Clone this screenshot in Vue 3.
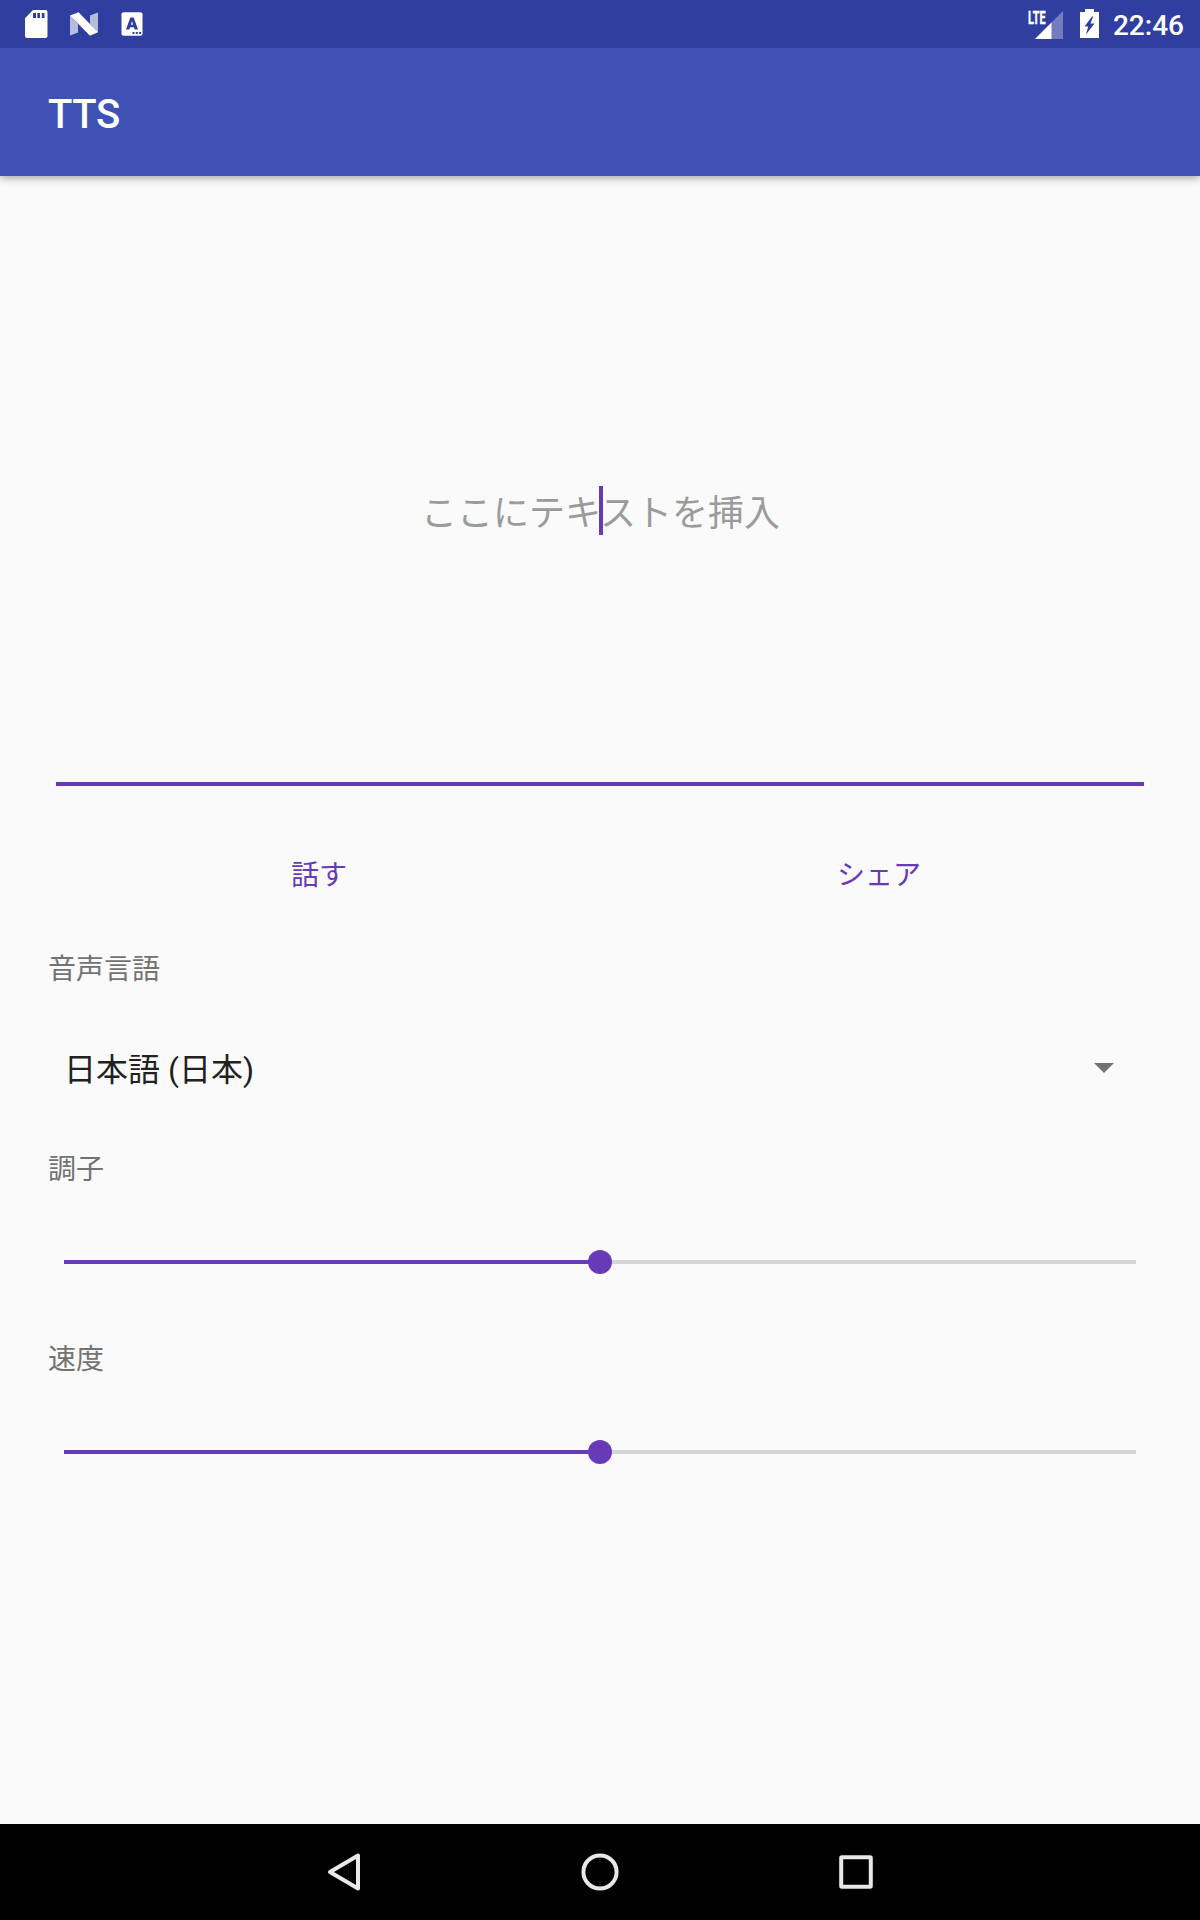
<template>
  <div class="screen">
    <header class="status-bar">
      <div class="status-left">
        <svg class="icon-sd" width="24" height="28" viewBox="0 0 24 28">
          <path
            fill="#fff"
            fill-rule="evenodd"
            d="M9 0H21.500a2 2 0 0 1 2 2V26a2 2 0 0 1-2 2H3a2 2 0 0 1-2-2V8.300ZM9 3v5h3V3ZM13.300 3v5h2.700V3ZM17.800 3v5h2.700V3Z"
          />
        </svg>
        <svg class="icon-n" width="28" height="24" viewBox="0 0 28 24">
          <path fill="#fff" fill-opacity=".65" d="M0 3.500 8 12V20.500L0 23.500ZM28 .5V20.500L20 12V3.500Z" />
          <path fill="#fff" d="M0 3.500 8.500.3 28 20.200 20 23.700Z" />
        </svg>
        <svg class="icon-lang" width="22" height="24" viewBox="0 0 22 24">
          <rect x=".5" y=".3" width="21" height="23.400" rx="2" fill="#fff" />
          <path
            fill="#303f9f"
            fill-rule="evenodd"
            d="M9.300 5.500H12.700L17 17.500H13.700L12.900 15.300H9.100L8.300 17.500H5ZM9.900 12.700H12.100L11 9.200Z"
          />
          <path d="M11.500 20h2v2h-2zM14.800 20h2v2h-2zM18.100 20h2v2h-2z" fill="#303f9f" />
        </svg>
      </div>
      <div class="status-right">
        <div class="signal">
          <svg width="28" height="28" viewBox="0 0 28 28">
            <path d="M0 28 28 0V28Z" fill="#fff" fill-opacity=".32" />
            <path d="M0 28 16.500 11.500V28Z" fill="#fff" />
          </svg>
          <span class="lte">LTE</span>
        </div>
        <svg class="icon-battery" width="19" height="29" viewBox="0 0 19 29">
          <path d="M5 0h9v3h5v26H0V3h5Z" fill="#fff" />
          <path d="M12 7.500 4.500 17.500H8.200L6 25.500 14.500 14.500H10.500L13.200 7.500Z" fill="#303f9f" />
        </svg>
        <span class="clock">22:46</span>
      </div>
    </header>

    <div class="app-bar">
      <h1 class="title">TTS</h1>
    </div>

    <main class="content">
      <div class="editor">
        <span class="hint">ここにテキストを挿入</span>
        <span class="cursor"></span>
      </div>

      <div class="actions">
        <button v-for="label in actions" :key="label" class="action">{{ label }}</button>
      </div>

      <div class="label label--voice">音声言語</div>
      <div class="spinner">
        <span class="spinner-text">日本語 (日本)</span>
        <svg width="20" height="10" viewBox="0 0 20 10">
          <path d="M0 0H20L10 10Z" fill="#737373" />
        </svg>
      </div>

      <div v-for="s in sliders" :key="s.label" class="setting">
        <div class="label">{{ s.label }}</div>
        <div class="slider">
          <div class="slider-fill" :style="{ width: s.value + '%' }">
            <span class="thumb"></span>
          </div>
        </div>
      </div>
    </main>

    <nav class="nav-bar">
      <svg width="48" height="48" viewBox="0 0 48 48">
        <path d="M38 7.500V40.500L10 24Z" />
      </svg>
      <svg width="48" height="48" viewBox="0 0 48 48">
        <circle cx="24" cy="24" r="16.600" />
      </svg>
      <svg width="48" height="48" viewBox="0 0 48 48">
        <rect x="9.200" y="9.200" width="29.600" height="29.600" rx=".8" />
      </svg>
    </nav>
  </div>
</template>

<script setup>
import { ref } from 'vue'

const actions = ['話す', 'シェア']

const sliders = ref([
  { label: '調子', value: 50 },
  { label: '速度', value: 50 },
])
</script>

<style>
body {
  margin: 0;
  background: #fafafa;
}
</style>

<style scoped>
.screen {
  display: flex;
  flex-direction: column;
  width: 1200px;
  height: 1920px;
  overflow: hidden;
  background: #fafafa;
  font-family: Roboto, 'Noto Sans CJK JP', sans-serif;
}

/* ── Status bar ── */
.status-bar {
  position: relative;
  z-index: 1;
  display: flex;
  justify-content: space-between;
  flex-shrink: 0;
  height: 48px;
  background: #303f9f;
  color: #fff;
}
.status-bar svg { display: block; }

.status-left {
  display: flex;
  align-items: center;
  padding-left: 24px;
}
.icon-n    { margin-left: 22px; }
.icon-lang { margin-left: 23px; }

.status-right {
  display: flex;
  align-items: center;
  padding-right: 16px;
}
.signal {
  position: relative;
  margin: 1px 17px 0 0;
}
.lte {
  position: absolute;
  left: -7px;
  top: -1px;
  font-size: 17.5px;
  font-weight: 700;
  line-height: 16px;
  transform: scaleX(0.62);
  transform-origin: left;
  -webkit-text-stroke: 0.4px #fff;
}
.icon-battery { margin-top: -1px; }
.clock {
  margin: 4px 0 0 14px;
  font-size: 28px;
  font-weight: 500;
  line-height: 44px;
}

/* ── App bar ── */
.app-bar {
  position: relative;
  display: flex;
  align-items: center;
  flex-shrink: 0;
  height: 128px;
  padding-left: 48px;
  background: #3f51b5;
  box-shadow: 0 2px 8px rgba(0, 0, 0, 0.36);
}
.title {
  margin: 6px 0 0;
  color: #fff;
  font-size: 40px;
  font-weight: 500;
  line-height: 48px;
  letter-spacing: -0.4px;
}

/* ── Content ── */
.content {
  flex: 1;
  padding: 0 48px;
}
.editor {
  position: relative;
  display: flex;
  align-items: center;
  justify-content: center;
  height: 606px;
  margin: 0 8px;
  border-bottom: 4px solid #673ab7;
}
.hint {
  margin: 69px 0 0 1px;
  color: #9b9b9b;
  font-size: 36px;
  line-height: 50px;
}
.cursor {
  position: absolute;
  left: 543px;
  top: 310px;
  width: 4px;
  height: 49px;
  background: #673ab7;
}

.actions {
  display: flex;
  gap: 16px;
  margin-top: 40px;
}
.action {
  flex: 1;
  height: 96px;
  padding: 0 2px 2px 0;
  border: 0;
  background: none;
  color: #673ab7;
  font: 400 28px Roboto, 'Noto Sans CJK JP', sans-serif;
}

.label {
  color: #737373;
  font-size: 28px;
  line-height: 40px;
}
.label--voice { margin-top: 28px; }

.spinner {
  display: flex;
  align-items: center;
  justify-content: space-between;
  height: 96px;
  margin-top: 30px;
  padding: 0 38px 0 16px;
  color: #212121;
  font-size: 32px;
}
.spinner-text { margin-top: -2px; }

.setting { height: 190px; }
.spinner + .setting { margin-top: 34px; }

.slider {
  height: 4px;
  margin: 70px 16px 0;
  background: #d6d6d6;
}
.slider-fill {
  position: relative;
  height: 4px;
  background: #673ab7;
}
.thumb {
  position: absolute;
  right: -12px;
  top: -10px;
  width: 24px;
  height: 24px;
  border-radius: 50%;
  background: #673ab7;
}

/* ── Navigation bar ── */
.nav-bar {
  display: flex;
  align-items: center;
  justify-content: center;
  gap: 208px;
  flex-shrink: 0;
  height: 96px;
  background: #000;
}
.nav-bar svg {
  fill: none;
  stroke: #e8e8e8;
  stroke-width: 4;
  stroke-linejoin: round;
}
</style>
